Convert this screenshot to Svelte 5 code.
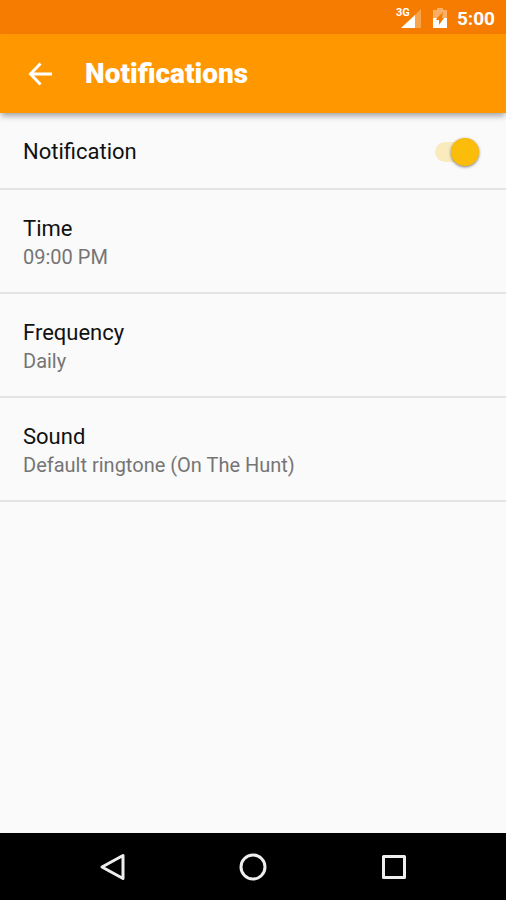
<script>
	let enabled = $state(true);

	const settings = [
		{ title: "Time", value: "09:00 PM" },
		{ title: "Frequency", value: "Daily" },
		{ title: "Sound", value: "Default ringtone (On The Hunt)" },
	];
</script>

<div class="screen">
	<div class="status-bar">
		<svg class="signal" viewBox="0 0 28 24" aria-hidden="true">
			<path d="M25 3v19H6z" fill="#fff" fill-opacity="0.3" />
			<path d="M19 9v13H5z" fill="#fff" />
			<text x="0" y="10">3G</text>
		</svg>
		<svg class="battery" viewBox="0 0 14 20" aria-hidden="true">
			<path d="M4 0h6v2h4v8H9l1-6-6 6H0V2h4z" fill="#fff" fill-opacity="0.4" />
			<path d="M0 10h4l-1 2h3v5l5-7h3v10H0z" fill="#fff" />
		</svg>
		<span class="clock">5:00</span>
	</div>

	<header>
		<button class="back" type="button" aria-label="Back">
			<svg viewBox="0 0 24 24" aria-hidden="true">
				<path d="M12.5 1.5L2.5 12l10 10.5M2.5 12H24" />
			</svg>
		</button>
		<h1>Notifications</h1>
	</header>

	<main>
		<label class="row toggle">
			<span class="title">Notification</span>
			<input type="checkbox" role="switch" bind:checked={enabled} />
		</label>
		{#each settings as setting}
			<button class="row" type="button">
				<span class="title">{setting.title}</span>
				<span class="value">{setting.value}</span>
			</button>
		{/each}
	</main>

	<nav>
		<button type="button" aria-label="Back">
			<svg viewBox="0 0 28 28" aria-hidden="true">
				<path d="M25 2.5v23L4 14z" />
			</svg>
		</button>
		<button type="button" aria-label="Home">
			<svg viewBox="0 0 28 28" aria-hidden="true">
				<circle cx="14" cy="14" r="12" />
			</svg>
		</button>
		<button type="button" aria-label="Recent apps">
			<svg viewBox="0 0 28 28" aria-hidden="true">
				<rect x="3.5" y="3.5" width="21" height="21" />
			</svg>
		</button>
	</nav>
</div>

<style>
	:global(body) {
		margin: 0;
	}
	.screen {
		display: flex;
		flex-direction: column;
		min-height: 100vh;
		background: #fafafa;
		font-family: Roboto, "Liberation Sans", sans-serif;
		color: #111;
	}
	button {
		padding: 0;
		border: none;
		background: none;
		font: inherit;
		color: inherit;
		cursor: pointer;
	}
	svg {
		display: block;
		flex: none;
	}

	.status-bar {
		display: flex;
		align-items: center;
		justify-content: flex-end;
		height: 34px;
		padding: 2px 11px 0 0;
		box-sizing: border-box;
		background: #f57c00;
		color: #fff;
	}
	.signal {
		width: 28px;
		height: 24px;
		margin-right: 9px;
	}
	.signal text {
		font-size: 11px;
		font-weight: 700;
		fill: #fff;
	}
	.battery {
		width: 14px;
		height: 20px;
		margin-right: 10px;
	}
	.clock {
		font-size: 19px;
		font-weight: 700;
	}

	header {
		display: flex;
		align-items: center;
		gap: 33px;
		height: 79px;
		padding: 0 28px;
		box-sizing: border-box;
		background: #ff9800;
		color: #fff;
		box-shadow: 0 4px 6px -1px rgba(0, 0, 0, 0.35);
	}
	.back svg {
		width: 24px;
		height: 24px;
		fill: none;
		stroke: #fff;
		stroke-width: 3;
	}
	h1 {
		margin: 0;
		font-size: 28px;
		font-weight: 900;
	}

	main {
		flex: 1;
	}
	.row {
		display: flex;
		flex-direction: column;
		width: 100%;
		box-sizing: border-box;
		padding: 25px 23px 21px;
		border-bottom: 2px solid #e4e4e4;
		text-align: left;
	}
	.row.toggle {
		flex-direction: row;
		align-items: center;
		justify-content: space-between;
		padding-bottom: 22px;
		cursor: pointer;
	}
	.title {
		font-size: 22px;
		line-height: 28px;
	}
	.value {
		font-size: 20px;
		line-height: 28px;
		color: #757575;
	}

	input {
		appearance: none;
		display: flex;
		align-items: center;
		width: 44px;
		height: 20px;
		margin: 0 4px 0 0;
		border-radius: 10px;
		background: #ccc;
		cursor: pointer;
	}
	input::before {
		content: "";
		width: 28px;
		height: 28px;
		border-radius: 50%;
		background: #f1f1f1;
		box-shadow: 0 1px 3px rgba(0, 0, 0, 0.5);
	}
	input:checked {
		justify-content: flex-end;
		background: #f9ebbd;
	}
	input:checked::before {
		background: #fcbc0a;
	}

	nav {
		display: flex;
		justify-content: center;
		height: 67px;
		background: #000;
	}
	nav button {
		display: flex;
		align-items: center;
		justify-content: center;
		width: 141px;
	}
	nav svg {
		width: 28px;
		height: 28px;
		fill: none;
		stroke: #eee;
		stroke-width: 3;
		stroke-linejoin: round;
	}
</style>
